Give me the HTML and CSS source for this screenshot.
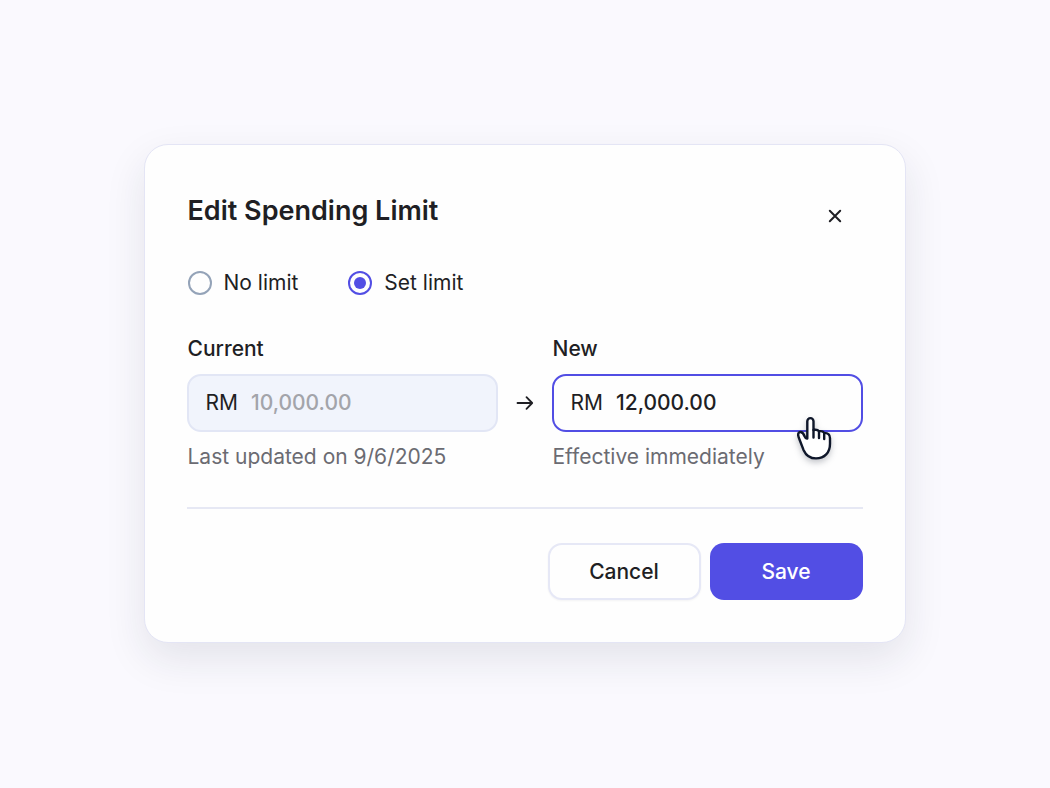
FILE: index.html
```
<!DOCTYPE html>
<html lang="en">
<head>
    <meta charset="UTF-8">
    <meta name="viewport" content="width=device-width, initial-scale=1.0">
    <title>Edit Spending Limit</title>
    <link rel="stylesheet" href="styles.css">
</head>
<body>
    <form class="modal" role="dialog" aria-labelledby="modalTitle">
        <header class="modal-header">
            <h1 id="modalTitle">Edit Spending Limit</h1>
            <button type="button" class="close-btn" aria-label="Close">
                <svg width="14" height="14" viewBox="0 0 14 14" fill="none" stroke="currentColor" stroke-width="2" stroke-linecap="round">
                    <path d="M1.8 1.8 12.2 12.2M12.2 1.8 1.8 12.2"/>
                </svg>
            </button>
        </header>

        <div class="options">
            <label class="option"><input type="radio" name="limit" value="none"> No limit</label>
            <label class="option"><input type="radio" name="limit" value="set" checked> Set limit</label>
        </div>

        <div class="fields">
            <div class="field">
                <label for="currentLimit">Current</label>
                <div class="input-box disabled">
                    <span>RM</span>
                    <input type="text" id="currentLimit" value="10,000.00" disabled>
                </div>
                <p class="hint">Last updated on 9/6/2025</p>
            </div>

            <svg class="arrow" width="18" height="16" viewBox="0 0 18 16" fill="none" stroke="currentColor" stroke-width="1.8" stroke-linecap="round" stroke-linejoin="round">
                <path d="M1.5 8H16M10.5 2.2 16.2 8l-5.7 5.8"/>
            </svg>

            <div class="field">
                <label for="newLimit">New</label>
                <div class="input-box active">
                    <span>RM</span>
                    <input type="text" id="newLimit" value="12,000.00">
                    <svg class="pointer" width="36" height="46" viewBox="0 0 36 46" fill="#fff" stroke="#0f172a" stroke-width="2.4" stroke-linecap="round" stroke-linejoin="round">
                        <path d="M10.3 22.5V5.2a3.1 3.1 0 0 1 6.2 0v8.8c2-.5 4.5 0 5.5 1.2 2-.3 4.2.3 5.2 1.7 3.4 0 5.8 1.7 5.8 5.3v5.500c0 9-5.500 14.700-14 14.700-6.500 0-10-3-12.500-8.500L2.500 23.500c-1.500-3.500-2.200-6.500.2-7.300 2.600-.8 4 1.800 5 4.300.6 1.400 1.400 2.300 2.600 2z"/>
                        <path d="M16.5 14V21.5M22 15.4V22M27.2 17.2V23" fill="none"/>
                    </svg>
                </div>
                <p class="hint">Effective immediately</p>
            </div>
        </div>

        <footer class="modal-footer">
            <button type="button" class="btn cancel-btn">Cancel</button>
            <button type="submit" class="btn save-btn">Save</button>
        </footer>
    </form>
</body>
</html>
```

FILE: styles.css
```
* {
    box-sizing: border-box;
}

body {
    margin: 0;
    min-height: 100vh;
    padding: 0 1px 1px 0;
    display: flex;
    justify-content: center;
    align-items: center;
    background: #faf9fe;
    color: #1f1f24;
    font-family: 'Inter', sans-serif;
    font-size: 21px;
    line-height: 28px;
}

.modal {
    width: 100%;
    max-width: 762px;
    padding: 46px 42px 42px;
    background: #fefefe;
    border: 1px solid #e4e5f5;
    border-radius: 24px;
    box-shadow: 0 16px 40px rgba(30, 41, 59, 0.1);
}

.modal-header {
    display: flex;
    justify-content: space-between;
    align-items: center;
    margin-bottom: 38px;
    padding-left: 1px;
}

h1 {
    margin: 0;
    font-size: 27px;
    font-weight: 600;
    line-height: 36px;
}

.close-btn {
    display: flex;
    padding: 11px;
    margin: 7px 10px -3px 0;
    background: none;
    border: none;
    color: inherit;
    cursor: pointer;
}

.options {
    display: flex;
    gap: 50px;
    margin-bottom: 38px;
    padding-left: 1px;
}

.option {
    display: flex;
    align-items: center;
    gap: 12px;
}

.option input {
    appearance: none;
    display: grid;
    place-items: center;
    width: 24px;
    height: 24px;
    margin: 0;
    border: 2px solid #94a3b8;
    border-radius: 50%;
}

    .option input:checked {
        border-color: #524ee4;
    }

    .option input:checked::before {
        content: "";
        width: 12px;
        height: 12px;
        border-radius: 50%;
        background: #524ee4;
    }

.fields {
    display: flex;
    align-items: center;
    gap: 18px;
    padding-bottom: 36px;
    border-bottom: 2px solid #e6e8f4;
}

.field {
    flex: 1;
    min-width: 0;
}

.field label {
    padding-left: 1px;
    font-weight: 500;
}

.input-box {
    position: relative;
    display: flex;
    align-items: center;
    gap: 13px;
    height: 58px;
    margin: 11px 0;
    padding: 0 17px;
    border: 2px solid #e2e6f5;
    border-radius: 14px;
}

.input-box input {
    flex: 1;
    min-width: 0;
    padding: 0;
    border: none;
    outline: none;
    background: none;
    color: inherit;
    font: inherit;
    font-weight: 500;
}

.input-box.disabled {
    background: #f1f4fc;
}

    .input-box.disabled input {
        color: #a3a4aa;
    }

.input-box.active {
    border-color: #524ee4;
}

.pointer {
    position: absolute;
    right: 28px;
    bottom: -32px;
    filter: drop-shadow(0 3px 3px rgba(15, 23, 42, 0.25));
}

.hint {
    margin: 0;
    padding-left: 1px;
    color: #6b6b72;
}

.modal-footer {
    display: flex;
    justify-content: flex-end;
    gap: 9px;
    margin-top: 34px;
}

.btn {
    width: 153px;
    height: 57px;
    border-radius: 14px;
    font: inherit;
    font-weight: 500;
    cursor: pointer;
}

.cancel-btn {
    background: #fefefe;
    border: 2px solid #e6e8f6;
    color: inherit;
    box-shadow: 0 1px 2px rgba(30, 41, 59, 0.05);
}

.save-btn {
    background: #524ee4;
    border: none;
    color: #fff;
}
```
